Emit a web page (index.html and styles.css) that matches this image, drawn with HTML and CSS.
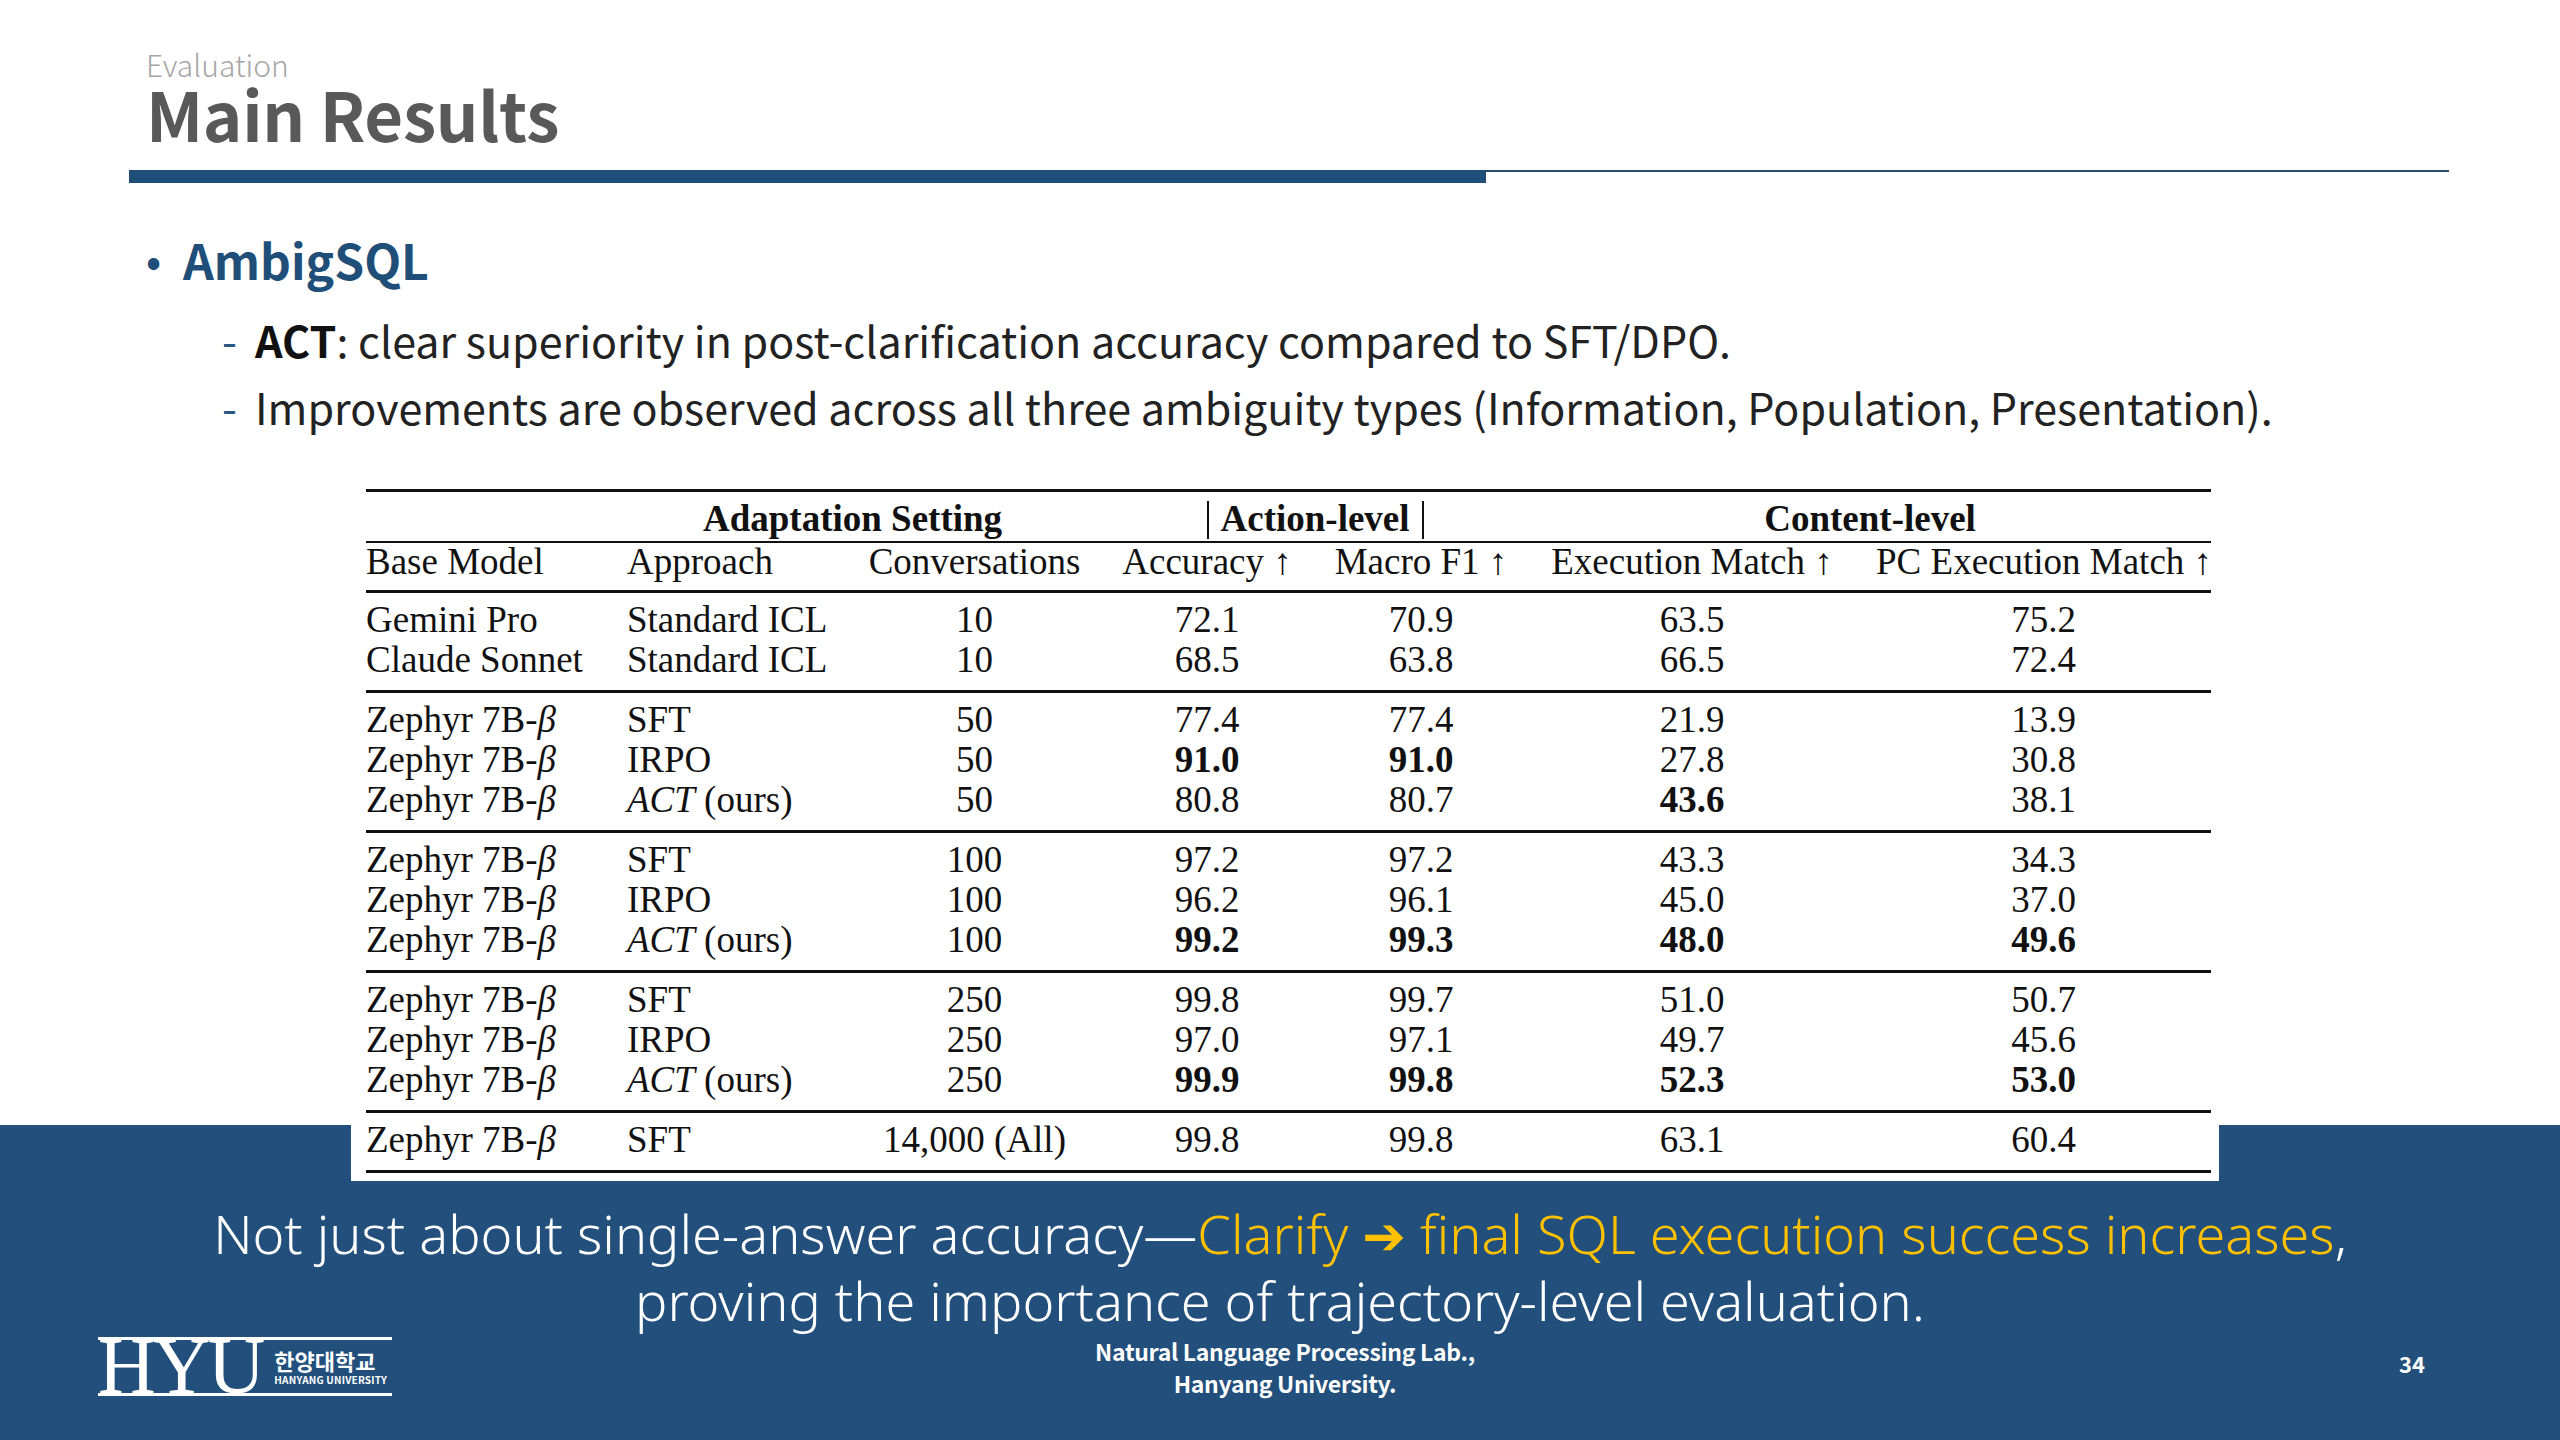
FILE: index.html
```html
<!DOCTYPE html>
<html lang="en">
<head>
<meta charset="utf-8">
<title>Main Results</title>
<link rel="stylesheet" href="styles.css">
</head>
<body>
<div class="slide">
  <header class="head">
    <div class="eyebrow">Evaluation</div>
    <h1 class="title">Main Results</h1>
  </header>
  <div class="rule"><div class="rule-thick"></div><div class="rule-thin"></div></div>

  <section class="content">
    <div class="bullet"><span class="dot">•</span><span class="bullet-text">AmbigSQL</span></div>
    <ul class="subs">
      <li><span class="dash">-</span><span><b>ACT</b>: clear superiority in post-clarification accuracy compared to SFT/DPO.</span></li>
      <li><span class="dash">-</span><span>Improvements are observed across all three ambiguity types (Information, Population, Presentation).</span></li>
    </ul>

    <div class="table-card">
      <table class="results">
        <colgroup>
          <col class="c1"><col class="c2"><col class="c3"><col class="c4"><col class="c5"><col class="c6"><col class="c7">
        </colgroup>
        <thead>
          <tr class="h1">
            <th></th>
            <th colspan="2" class="span">Adaptation Setting</th>
            <th colspan="2" class="span"><span class="vbar"></span>Action-level<span class="vbar"></span></th>
            <th colspan="2" class="span last">Content-level</th>
          </tr>
          <tr class="h2">
            <th>Base Model</th>
            <th>Approach</th>
            <th>Conversations</th>
            <th>Accuracy ↑</th>
            <th>Macro F1 ↑</th>
            <th>Execution Match ↑</th>
            <th>PC Execution Match ↑</th>
          </tr>
        </thead>
        <tbody>
          <tr class="first"><td>Gemini Pro</td><td>Standard ICL</td><td>10</td><td>72.1</td><td>70.9</td><td>63.5</td><td>75.2</td></tr>
          <tr class="last"><td>Claude Sonnet</td><td>Standard ICL</td><td>10</td><td>68.5</td><td>63.8</td><td>66.5</td><td>72.4</td></tr>
        </tbody>
        <tbody>
          <tr class="first"><td>Zephyr 7B-<i>β</i></td><td>SFT</td><td>50</td><td>77.4</td><td>77.4</td><td>21.9</td><td>13.9</td></tr>
          <tr><td>Zephyr 7B-<i>β</i></td><td>IRPO</td><td>50</td><td><b>91.0</b></td><td><b>91.0</b></td><td>27.8</td><td>30.8</td></tr>
          <tr class="last"><td>Zephyr 7B-<i>β</i></td><td><i>ACT</i> (ours)</td><td>50</td><td>80.8</td><td>80.7</td><td><b>43.6</b></td><td>38.1</td></tr>
        </tbody>
        <tbody>
          <tr class="first"><td>Zephyr 7B-<i>β</i></td><td>SFT</td><td>100</td><td>97.2</td><td>97.2</td><td>43.3</td><td>34.3</td></tr>
          <tr><td>Zephyr 7B-<i>β</i></td><td>IRPO</td><td>100</td><td>96.2</td><td>96.1</td><td>45.0</td><td>37.0</td></tr>
          <tr class="last"><td>Zephyr 7B-<i>β</i></td><td><i>ACT</i> (ours)</td><td>100</td><td><b>99.2</b></td><td><b>99.3</b></td><td><b>48.0</b></td><td><b>49.6</b></td></tr>
        </tbody>
        <tbody>
          <tr class="first"><td>Zephyr 7B-<i>β</i></td><td>SFT</td><td>250</td><td>99.8</td><td>99.7</td><td>51.0</td><td>50.7</td></tr>
          <tr><td>Zephyr 7B-<i>β</i></td><td>IRPO</td><td>250</td><td>97.0</td><td>97.1</td><td>49.7</td><td>45.6</td></tr>
          <tr class="last"><td>Zephyr 7B-<i>β</i></td><td><i>ACT</i> (ours)</td><td>250</td><td><b>99.9</b></td><td><b>99.8</b></td><td><b>52.3</b></td><td><b>53.0</b></td></tr>
        </tbody>
        <tbody class="final">
          <tr class="first last"><td>Zephyr 7B-<i>β</i></td><td>SFT</td><td>14,000 (All)</td><td>99.8</td><td>99.8</td><td>63.1</td><td>60.4</td></tr>
        </tbody>
      </table>
    </div>
  </section>

  <footer class="band">
    <p class="callout">Not just about single-answer accuracy—<span class="hl">Clarify <span class="arrow">➔</span> final SQL execution success increases</span>,<br>proving the importance of trajectory-level evaluation.</p>
    <div class="foot-row">
      <div class="logo">
        <span class="logo-hyu">HYU</span>
        <span class="logo-side">
          <span class="logo-ko">한양대학교</span>
          <span class="logo-en">HANYANG UNIVERSITY</span>
        </span>
      </div>
      <div class="lab">Natural Language Processing Lab.,<br>Hanyang University.</div>
      <div class="page">34</div>
    </div>
  </footer>
</div>
</body>
</html>
```

FILE: styles.css
```css
* { box-sizing: border-box; }
html, body { margin: 0; padding: 0; background: #ffffff; }

.slide {
  width: 2560px;
  height: 1440px;
  display: flex;
  flex-direction: column;
  background: #ffffff;
  overflow: hidden;
  font-family: "Noto Sans CJK KR", "Noto Sans", sans-serif;
}

/* ---------- header ---------- */
.head { padding-left: 146px; }
.eyebrow {
  margin-top: 50px;
  font-size: 30px;
  line-height: 29px;
  height: 29px;
  font-weight: 300;
  color: #a6a6a6;
}
.title {
  margin: 0;
  font-size: 67px;
  line-height: 68px;
  font-weight: 700;
  color: #595959;
  letter-spacing: -0.3px;
}
.rule {
  display: flex;
  align-items: flex-start;
  margin: 23px 0 0 129px;
}
.rule-thick { width: 1357px; height: 13px; background: #1f4e79; }
.rule-thin { width: 963px; height: 2px; background: #2b4d6f; }

/* ---------- content ---------- */
.content { display: flex; flex-direction: column; }
.bullet {
  display: flex;
  align-items: center;
  margin: 46px 0 0 146px;
  height: 60px;
  color: #1f4e79;
  font-weight: 700;
}
.dot { font-size: 40px; width: 37px; line-height: 60px; }
.bullet-text { font-size: 48px; line-height: 60px; }

.subs {
  list-style: none;
  margin: 17px 0 0 222px;
  padding: 0;
  font-size: 43px;
  line-height: 67px;
  color: #222222;
}
.subs li { display: flex; }
.subs b { font-weight: 700; color: #111; }
.dash { width: 33px; color: #2a5784; }

/* ---------- table ---------- */
.table-card {
  position: relative;
  z-index: 1;
  align-self: flex-start;
  margin: 29px 0 -59px 351px;
  padding: 20px 8px 8px 15px;
  background: #ffffff;
}
.results {
  border-collapse: separate;
  border-spacing: 0;
  table-layout: fixed;
  width: 1845px;
  font-family: "Liberation Serif", "Times New Roman", serif;
  font-size: 37px;
  color: #111111;
}
.results col.c1 { width: 238px; }
.results col.c2 { width: 244px; }
.results col.c3 { width: 253px; }
.results col.c4 { width: 212px; }
.results col.c5 { width: 216px; }
.results col.c6 { width: 326px; }
.results col.c7 { width: 356px; }

.results th, .results td {
  padding: 0;
  text-align: center;
  white-space: nowrap;
  line-height: 40px;
  font-weight: 400;
}
.results th:nth-child(1), .results td:nth-child(1) { text-align: left; }
.results .h2 th:nth-child(2), .results td:nth-child(2) { text-align: left; padding-left: 23px; }
.results .h2 th:nth-child(7), .results td:nth-child(7) { padding-left: 21px; }

.results .h1 th {
  border-top: 3px solid #111;
  padding-top: 7px;
  padding-bottom: 2px;
  font-weight: 700;
}
.results .h1 th.span { text-align: center; padding-left: 0; }
.results .h1 th.last { padding-left: 0; }
.results .h2 th {
  border-top: 2px solid #111;
  line-height: 38px;
  padding-bottom: 9px;
}
.results tr.first td { border-top: 3px solid #111; padding-top: 7px; }
.results tr.last td { padding-bottom: 10px; }
.results .final tr td { border-bottom: 3px solid #111; }
.results b { font-weight: 700; }
.results i { font-style: italic; }

.vbar {
  display: inline-block;
  width: 0;
  height: 38px;
  border-left: 2px solid #111;
  vertical-align: -8px;
  margin: 0 12px;
}

/* ---------- footer band ---------- */
.band {
  flex-shrink: 0;
  margin-top: auto;
  height: 315px;
  background: #224f7b;
  color: #ffffff;
  padding-top: 76px;
}
.callout {
  margin: 0;
  text-align: center;
  font-family: "Noto Sans", sans-serif;
  font-weight: 300;
  font-size: 54px;
  line-height: 64px;
}
.hl { color: #ffc000; }
.arrow { font-family: "DejaVu Sans", sans-serif; font-size: 52px; font-weight: 700; }

.foot-row {
  display: grid;
  grid-template-columns: 1fr auto 1fr;
  align-items: center;
  margin-top: 1px;
  height: 59px;
  padding: 0 98px 0 108px;
}
.logo {
  justify-self: start;
  margin-left: -10px;
  display: flex;
  align-items: stretch;
  width: 294px;
  height: 59px;
  border-top: 3px solid #ffffff;
  border-bottom: 3px solid #ffffff;
}
.logo-hyu {
  display: block;
  font-family: "Liberation Serif", "Times New Roman", serif;
  font-size: 80px;
  line-height: 53px;
  height: 53px;
  letter-spacing: -3px;
}
.logo-side {
  display: flex;
  flex-direction: column;
  justify-content: center;
  margin-left: 12px;
}
.logo-ko {
  font-size: 22px;
  line-height: 26px;
  font-weight: 700;
}
.logo-en {
  font-size: 10px;
  line-height: 13px;
  font-weight: 700;
  letter-spacing: 0.2px;
}
.lab {
  margin-top: 2px;
  text-align: center;
  font-size: 23px;
  line-height: 32px;
  font-weight: 700;
  letter-spacing: -0.3px;
}
.page {
  justify-self: end;
  margin: 0 37px 6px 0;
  font-size: 22px;
  font-weight: 700;
}
```
